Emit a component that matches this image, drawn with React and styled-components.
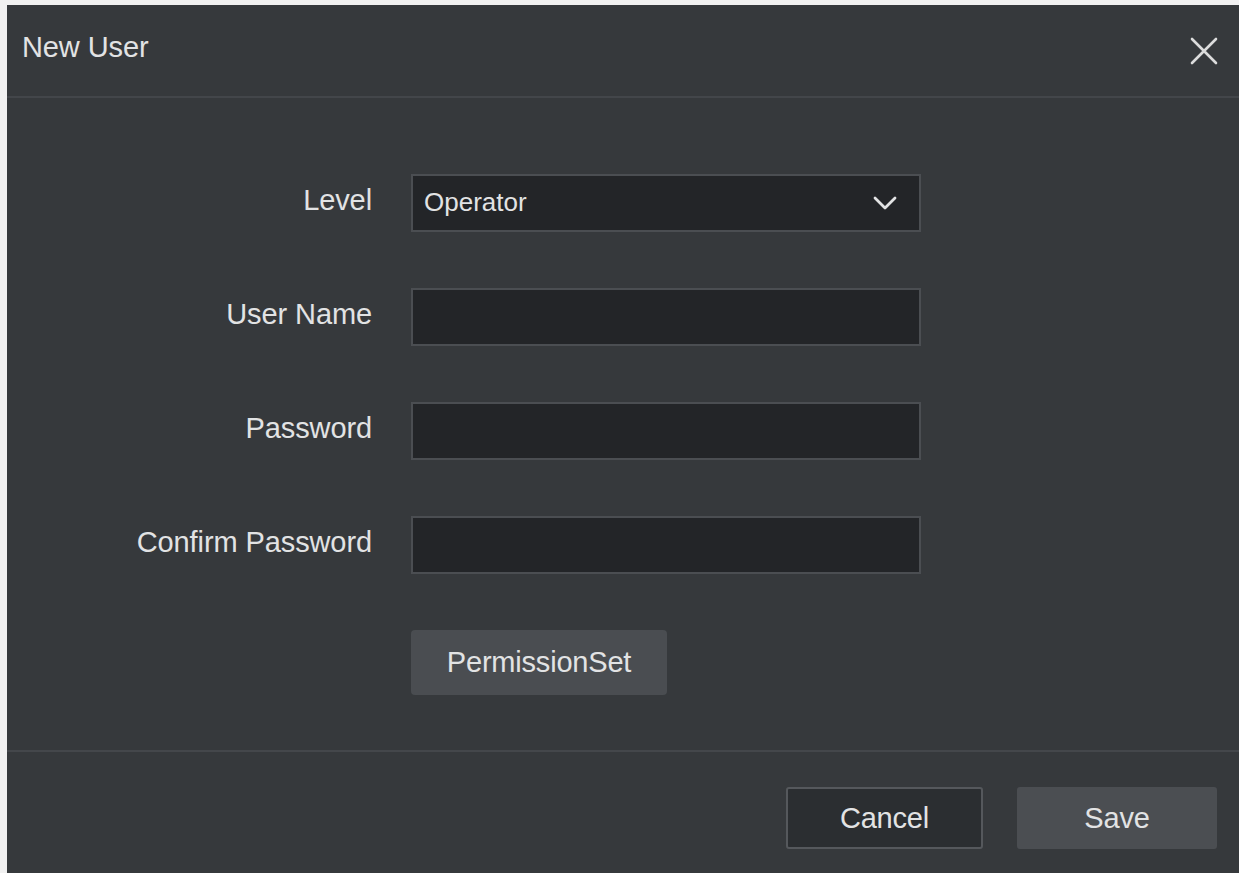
import React from "react";
import styled, { createGlobalStyle } from "styled-components";

const GlobalStyle = createGlobalStyle`
  html, body {
    margin: 0;
    padding: 0;
    background: #f1f1f1;
    font-family: "Liberation Sans", Arial, sans-serif;
  }
`;

const Page = styled.div`
  width: 1239px;
  height: 873px;
  padding: 5px 0 0 7px;
  box-sizing: border-box;
  overflow: hidden;
`;

const Dialog = styled.div`
  height: 868px;
  background: #36393c;
  display: flex;
  flex-direction: column;
  color: #e2e3e4;
`;

const Header = styled.div`
  height: 91px;
  display: flex;
  align-items: center;
  justify-content: space-between;
  padding: 0 20px 0 15px;
  border-bottom: 2px solid #43464a;
`;

const Title = styled.h1`
  margin: 0;
  font-size: 29px;
  font-weight: normal;
  letter-spacing: -0.1px;
  padding-bottom: 6px;
`;

const CloseButton = styled.button`
  background: none;
  border: none;
  padding: 0;
  width: 30px;
  height: 30px;
  display: flex;
  align-items: center;
  justify-content: center;
  cursor: pointer;
`;

const Body = styled.div`
  flex: 1;
  padding-top: 76px;
  border-bottom: 2px solid #44474b;
`;

const Form = styled.div`
  display: grid;
  grid-template-columns: 365px 510px;
  column-gap: 39px;
  row-gap: 56px;
  align-items: center;
`;

const Label = styled.label`
  text-align: right;
  font-size: 29px;
  letter-spacing: -0.1px;
  padding-bottom: 6px;
`;

const Field = styled.div`
  height: 58px;
  box-sizing: border-box;
  background: #232528;
  border: 2px solid #4b4e52;
  display: flex;
  align-items: center;
  justify-content: space-between;
  padding: 0 22px 0 11px;
  font-size: 26px;
`;

const SelectText = styled.span`
  padding-bottom: 2px;
`;

const SetButton = styled.button`
  grid-column: 2;
  width: 256px;
  height: 65px;
  background: #4a4d51;
  border: none;
  border-radius: 4px;
  color: #e2e3e4;
  font-family: inherit;
  font-size: 29px;
  letter-spacing: -0.2px;
`;

const Footer = styled.div`
  height: 121px;
  display: flex;
  align-items: flex-start;
  justify-content: flex-end;
  gap: 34px;
  padding: 35px 22px 0 0;
  box-sizing: border-box;
`;

const FooterButton = styled.button`
  width: ${(p) => (p.$primary ? "200px" : "197px")};
  height: 62px;
  border-radius: 3px;
  background: ${(p) => (p.$primary ? "#4b4e52" : "#2b2e31")};
  border: 2px solid ${(p) => (p.$primary ? "#4b4e52" : "#55585c")};
  color: #e2e3e4;
  font-family: inherit;
  font-size: 29px;
  letter-spacing: -0.2px;
`;

const CloseIcon = () => (
  <svg width="28" height="28" viewBox="0 0 28 28">
    <path d="M2 2 L26 26 M26 2 L2 26" stroke="#dcdcdc" strokeWidth="2.6" strokeLinecap="round" />
  </svg>
);

const Chevron = () => (
  <svg width="24" height="14" viewBox="0 0 24 14">
    <path d="M2 2 L12 12 L22 2" fill="none" stroke="#e2e3e4" strokeWidth="2.8" strokeLinecap="round" strokeLinejoin="round" />
  </svg>
);

const fields = ["User Name", "Password", "Confirm Password"];

export default function App() {
  return (
    <Page>
      <GlobalStyle />
      <Dialog>
        <Header>
          <Title>New User</Title>
          <CloseButton aria-label="Close">
            <CloseIcon />
          </CloseButton>
        </Header>
        <Body>
          <Form>
            <Label>Level</Label>
            <Field>
              <SelectText>Operator</SelectText>
              <Chevron />
            </Field>
            {fields.map((f) => (
              <React.Fragment key={f}>
                <Label>{f}</Label>
                <Field />
              </React.Fragment>
            ))}
            <SetButton>PermissionSet</SetButton>
          </Form>
        </Body>
        <Footer>
          <FooterButton>Cancel</FooterButton>
          <FooterButton $primary>Save</FooterButton>
        </Footer>
      </Dialog>
    </Page>
  );
}
